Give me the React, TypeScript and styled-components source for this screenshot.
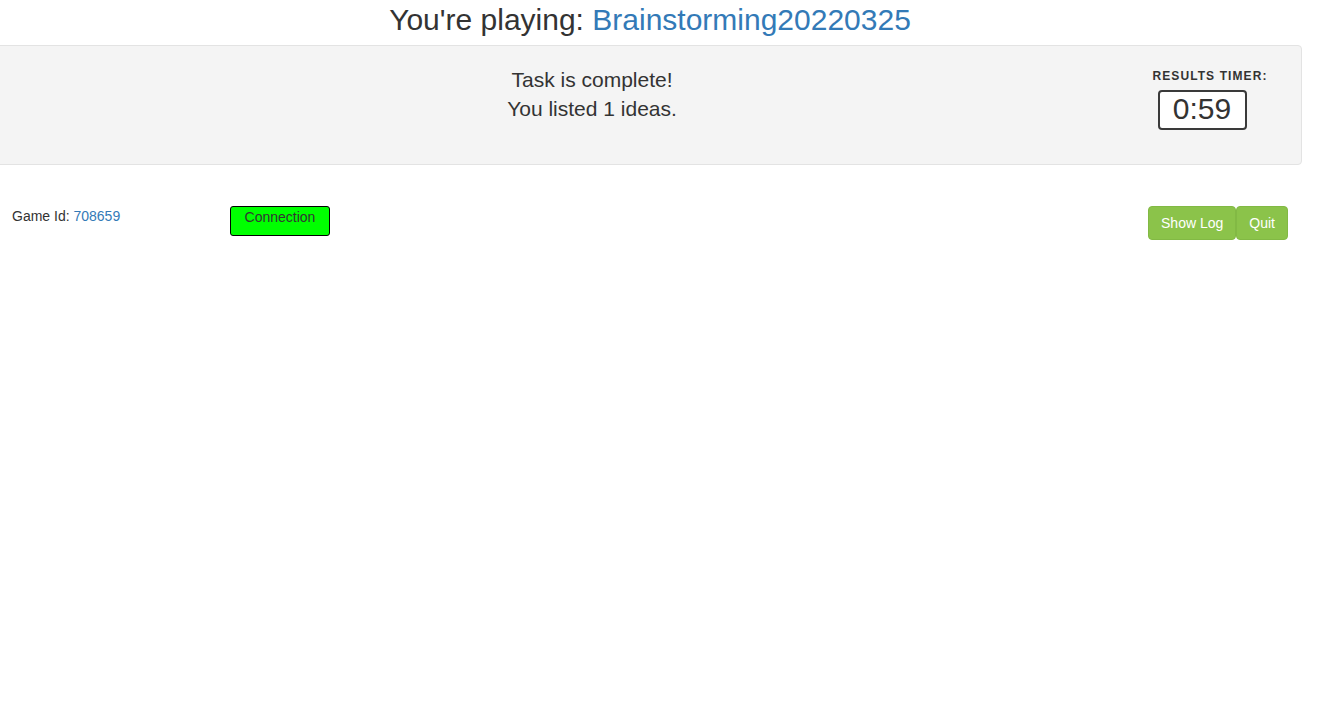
import React from "react";
import styled, { createGlobalStyle } from "styled-components";

const Global = createGlobalStyle`
  html, body { margin: 0; padding: 0; background: #fff; }
  body {
    font-family: "Liberation Sans", Arial, Helvetica, sans-serif;
    font-size: 14px;
    line-height: 1.42857;
    color: #333;
    overflow: hidden;
  }
`;

const Page = styled.div`
  width: 1300px;
`;

const Title = styled.h3`
  margin: 0 0 9px;
  padding-top: 3px;
  font-size: 30px;
  line-height: 33px;
  font-weight: 400;
  text-align: center;
  color: #333;
`;

const GameLink = styled.span`
  color: #337ab7;
`;

const Well = styled.div`
  box-sizing: border-box;
  margin-left: -20px;
  width: 1322px;
  height: 120px;
  padding: 20px 29px 19px 19px;
  background: #f4f4f4;
  border: 1px solid #e3e3e3;
  border-radius: 4px;
  display: grid;
  grid-template-columns: 1fr 140px;
  align-items: start;
`;

const Message = styled.div`
  padding-left: 52px;
  text-align: center;
  font-size: 21px;
  line-height: 28.6px;
  color: #333;
`;

const TimerCol = styled.div`
  display: flex;
  flex-direction: column;
  align-items: center;
  padding-top: 2px;
`;

const TimerLabel = styled.div`
  font-size: 12px;
  line-height: 17px;
  font-weight: 700;
  letter-spacing: 1.1px;
  color: #333;
  margin-left: 16px;
`;

const TimerBox = styled.div`
  box-sizing: border-box;
  margin-top: 5px;
  width: 89px;
  height: 40px;
  border: 2px solid #3a3a3a;
  border-radius: 4px;
  background: #fff;
  font-size: 30px;
  line-height: 34px;
  text-align: center;
  color: #333;
`;

const Footer = styled.div`
  margin-top: 41px;
  padding: 0 12px;
  display: grid;
  grid-template-columns: 218px 100px 1fr auto;
  align-items: start;
`;

const GameId = styled.div`
  font-size: 14px;
  line-height: 20px;
  color: #333;
`;

const IdValue = styled.span`
  color: #337ab7;
`;

const ConnectionBadge = styled.div`
  box-sizing: border-box;
  height: 30px;
  width: 100px;
  background: #00ff00;
  border: 1px solid #000;
  border-radius: 3px;
  font-size: 14px;
  line-height: 20px;
  text-align: center;
  color: #333;
`;

const ButtonGroup = styled.div`
  grid-column: 4;
  display: flex;
`;

const GreenButton = styled.button`
  box-sizing: border-box;
  height: 34px;
  padding: 6px 12px;
  font-family: "Liberation Sans", Arial, sans-serif;
  font-size: 14px;
  line-height: 20px;
  color: #fff;
  background: #8bc34a;
  border: 1px solid #82b944;
  border-radius: 4px;
  cursor: pointer;
`;

export default function App() {
  return (
    <>
      <Global />
      <Page>
        <Title>
          You're playing: <GameLink>Brainstorming20220325</GameLink>
        </Title>
        <Well>
          <Message>
            <div>Task is complete!</div>
            <div>You listed 1 ideas.</div>
          </Message>
          <TimerCol>
            <TimerLabel>RESULTS TIMER:</TimerLabel>
            <TimerBox>0:59</TimerBox>
          </TimerCol>
        </Well>
        <Footer>
          <GameId>
            Game Id: <IdValue>708659</IdValue>
          </GameId>
          <ConnectionBadge>Connection</ConnectionBadge>
          <ButtonGroup>
            <GreenButton>Show Log</GreenButton>
            <GreenButton>Quit</GreenButton>
          </ButtonGroup>
        </Footer>
      </Page>
    </>
  );
}
